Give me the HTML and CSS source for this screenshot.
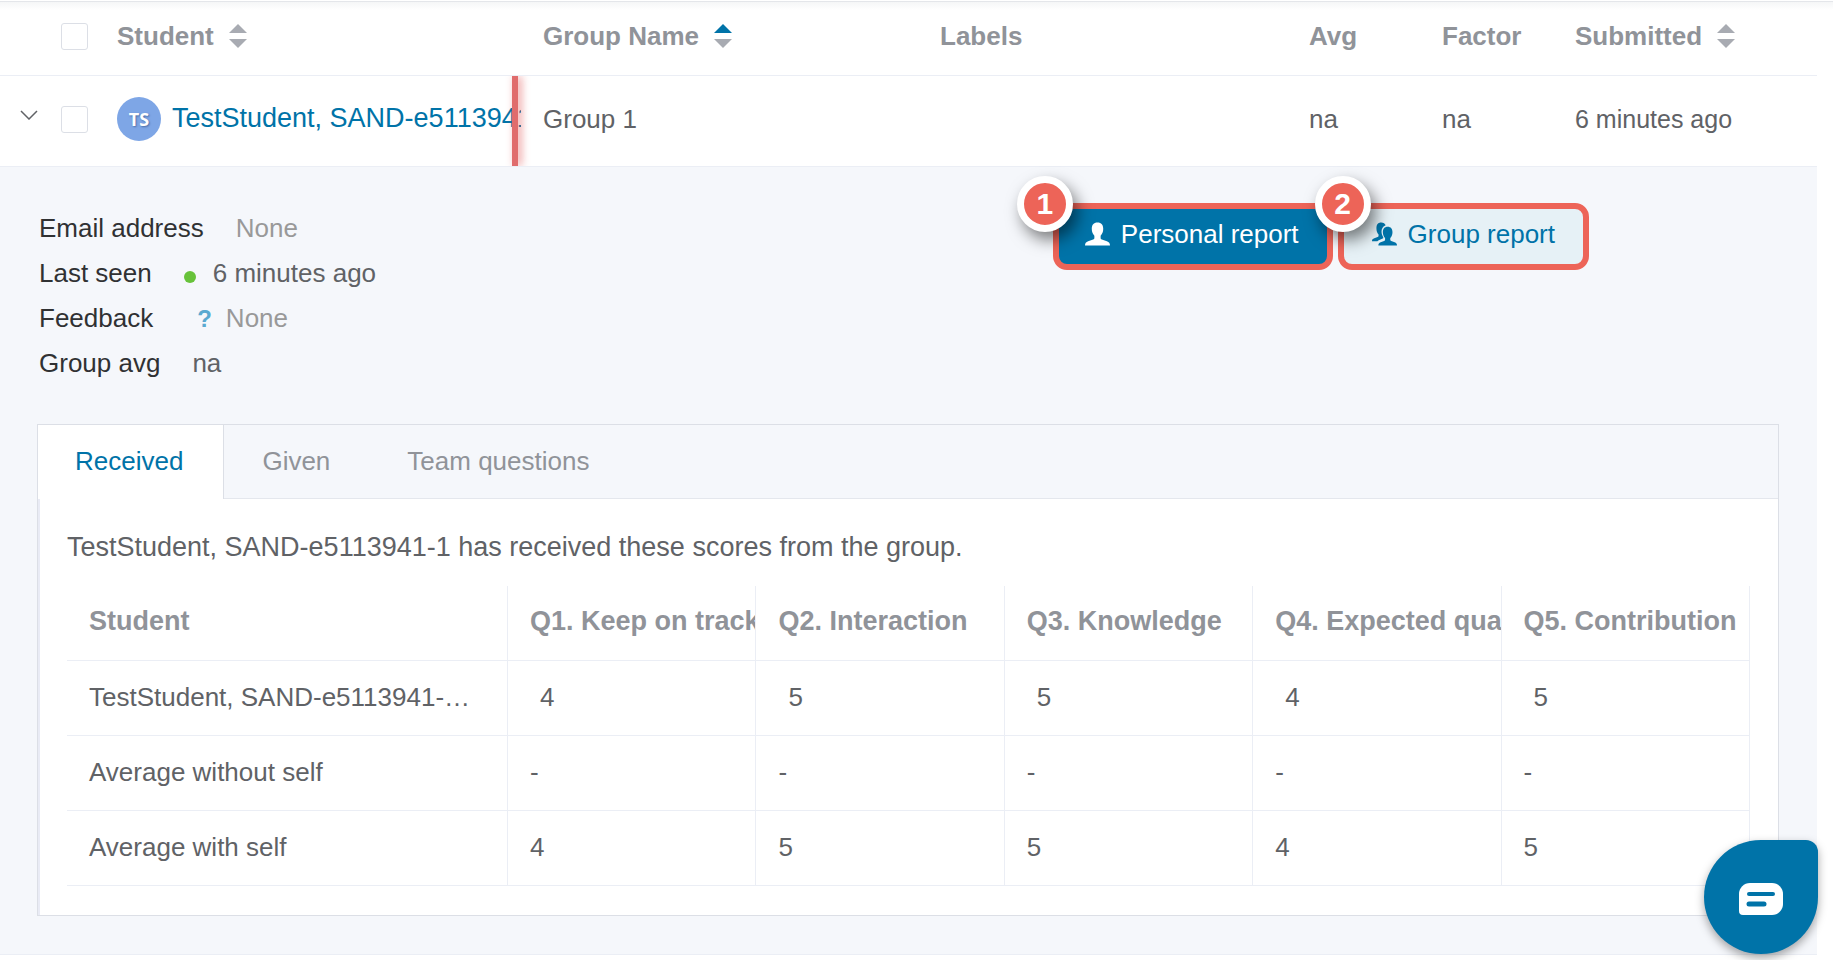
FILE: index.html
```html
<!DOCTYPE html>
<html lang="en">
<head>
<meta charset="utf-8">
<title>Student reports</title>
<link rel="stylesheet" href="styles.css">
</head>
<body>
<main class="page">
  <table class="students">
    <colgroup>
      <col class="c-expand"><col class="c-student"><col class="c-group"><col class="c-labels"><col class="c-avg"><col class="c-factor"><col class="c-submitted">
    </colgroup>
    <thead>
      <tr>
        <th><div class="select"><input type="checkbox" class="check" aria-label="Select all students"></div></th>
        <th><span class="sortable">Student <svg class="sort" viewBox="0 0 18 24"><path d="M9 0l9 9H0z"/><path d="M9 24l9-9H0z"/></svg></span></th>
        <th><span class="sortable">Group Name <svg class="sort" viewBox="0 0 18 24"><path class="active" d="M9 0l9 9H0z"/><path d="M9 24l9-9H0z"/></svg></span></th>
        <th>Labels</th>
        <th>Avg</th>
        <th>Factor</th>
        <th><span class="sortable">Submitted <svg class="sort" viewBox="0 0 18 24"><path d="M9 0l9 9H0z"/><path d="M9 24l9-9H0z"/></svg></span></th>
      </tr>
    </thead>
    <tbody>
      <tr>
        <td><div class="select">
          <button class="expand" aria-label="Collapse row"><svg viewBox="0 0 18 10"><path d="M1 1l8 8 8-8"/></svg></button>
          <input type="checkbox" class="check" aria-label="Select TestStudent">
        </div></td>
        <td class="student"><div class="person"><span class="avatar">TS</span><a href="#student" class="name">TestStudent, SAND-e5113941</a></div><span class="marker"></span></td>
        <td>Group 1</td>
        <td></td>
        <td>na</td>
        <td>na</td>
        <td class="time">6 minutes ago</td>
      </tr>
    </tbody>
  </table>

  <section class="detail">
    <div class="summary">
      <dl class="facts">
        <div class="fact"><dt>Email address</dt><dd class="muted">None</dd></div>
        <div class="fact"><dt>Last seen</dt><dd class="seen"><span class="dot"></span>6 minutes ago</dd></div>
        <div class="fact"><dt>Feedback</dt><dd class="muted feedback"><span class="help">?</span>None</dd></div>
        <div class="fact"><dt>Group avg</dt><dd>na</dd></div>
      </dl>
      <div class="actions">
        <div class="callout">
          <button class="report primary"><svg class="icon" viewBox="0 0 24 22"><path d="M12 0c3.700 0 5.500 2.300 5.500 6 0 3-1 5-2.500 6.600v2.200c0 .8.4 1.200 1.200 1.500l4.800 1.700c2 .8 3 1.800 3 4H0c0-2.200 1-3.200 3-4l4.800-1.700c.8-.3 1.200-.7 1.200-1.500v-2.200C7.500 11 6.500 9 6.500 6c0-3.700 1.800-6 5.500-6z"/></svg>Personal report</button>
          <span class="badge">1</span>
        </div>
        <div class="callout">
          <button class="report"><svg class="icon" viewBox="0 0 26 24"><path d="M9.500 0c2.600 0 4 1.200 4.700 3-2.800 1-4.300 3.500-4.300 6.500 0 2.300.7 4.200 1.800 5.800v1.200L7 18.500c-.6.300-1 .6-1.400 1H0c0-1.600.8-2.400 2.400-3l3.400-1.300c.8-.3 1-.7 1-1.300v-1.500C5.300 11 4.600 8.800 4.600 6 4.600 2.200 6.200 0 9.500 0z"/><path d="M16.300 4.500c3.300 0 5 2.200 5 5.700 0 2.600-.9 4.600-2.300 6v1.800c0 .7.300 1 1 1.300l3.600 1.300c1.600.6 2.400 1.600 2.400 3.400H6.600c0-1.800.8-2.800 2.400-3.400l3.600-1.300c.7-.3 1-.6 1-1.300v-1.800c-1.400-1.400-2.300-3.400-2.300-6 0-3.500 1.700-5.700 5-5.700z"/></svg>Group report</button>
          <span class="badge">2</span>
        </div>
      </div>
    </div>

    <div class="card">
      <div class="tabs" role="tablist">
        <button class="tab selected" role="tab" aria-selected="true">Received</button>
        <button class="tab" role="tab" aria-selected="false">Given</button>
        <button class="tab" role="tab" aria-selected="false">Team questions</button>
      </div>
      <div class="panel" role="tabpanel">
        <p class="intro">TestStudent, SAND-e5113941-1 has received these scores from the group.</p>
        <table class="scores">
          <colgroup><col class="s-name"><col><col><col><col><col></colgroup>
          <thead>
            <tr><th>Student</th><th>Q1. Keep on track</th><th>Q2. Interaction</th><th>Q3. Knowledge</th><th>Q4. Expected qual</th><th>Q5. Contribution</th></tr>
          </thead>
          <tbody>
            <tr class="given"><td>TestStudent, SAND-e5113941-…</td><td>4</td><td>5</td><td>5</td><td>4</td><td>5</td></tr>
            <tr><td>Average without self</td><td>-</td><td>-</td><td>-</td><td>-</td><td>-</td></tr>
            <tr><td>Average with self</td><td>4</td><td>5</td><td>5</td><td>4</td><td>5</td></tr>
          </tbody>
        </table>
      </div>
    </div>
  </section>
</main>
<button class="chat" aria-label="Open chat"><svg viewBox="0 0 44 32"><path class="bubble" d="M11 0h22a11 11 0 0 1 11 11v10a11 11 0 0 1-11 11H4a4 4 0 0 1-4-4V11A11 11 0 0 1 11 0z"/><path class="line" d="M10 11h24"/><path class="line thick" d="M10 21h15"/></svg></button>
</body>
</html>
```
FILE: styles.css
```css
* { box-sizing: border-box; }

body {
  margin: 0;
  background: #fff;
  color: #606266;
  font: 26px/30px "Liberation Sans", Arial, sans-serif;
}

button { font: inherit; color: inherit; cursor: pointer; }

.page { padding-top: 1px; }

/* Student list */
.students {
  width: calc(100% - 16px);
  table-layout: fixed;
  border-collapse: separate;
  border-spacing: 0;
}
.page::before {
  content: "";
  display: block;
  height: 8px;
  margin-bottom: -8px;
  border-top: 1px solid #e4e6ea;
  background: linear-gradient(#f5f6f7, #fff);
}
.c-expand { width: 95px; }
.c-student { width: 426px; }
.c-group { width: 397px; }
.c-avg { width: 133px; }
.c-factor { width: 133px; }
.c-submitted { width: 264px; }

.students th, .students td {
  padding: 0 0 0 22px;
  border-bottom: 1px solid #ebeef5;
  text-align: left;
}
.students th { height: 74px; padding-bottom: 5px; color: #909399; }
.students td { height: 91px; padding-bottom: 4px; }
.students .time { font-size: 25px; }

.sortable { display: flex; align-items: center; gap: 15px; }
.sort { width: 18px; height: 24px; fill: #a8abb2; }
.sort .active { fill: #0073a8; }

.select { display: flex; align-items: center; justify-content: flex-end; gap: 23px; padding-right: 7px; }
.students th:first-child, .students td:first-child { padding-left: 0; }
.check {
  appearance: none;
  width: 27px;
  height: 27px;
  margin: 0;
  border: 1px solid #dcdfe6;
  border-radius: 3px;
  background: #fff;
}
.expand { display: flex; padding: 0 0 8px; border: 0; background: none; }
.expand svg { width: 18px; height: 10px; fill: none; stroke: #606266; stroke-width: 1.500; }

.students .student { position: relative; }
.person { display: flex; align-items: center; gap: 11px; overflow: hidden; white-space: nowrap; }
.avatar {
  flex: none;
  width: 44px;
  height: 44px;
  border-radius: 50%;
  background: #7ea6e6;
  color: #fff;
  font: bold 18px/44px "Open Sans", sans-serif;
  text-align: center;
  text-shadow: 1px 1px 2px #4a6da6;
}
.name { padding-bottom: 2px; color: #0073a8; font-size: 27px; text-decoration: none; }
.marker {
  position: absolute;
  top: 0;
  bottom: 0;
  right: 3px;
  width: 6px;
  background: #e06c6c;
  box-shadow: 3px 0 8px rgba(224, 80, 80, .6);
  clip-path: inset(0 -14px 0 -8px);
}

/* Expanded row */
.detail {
  margin-right: 16px;
  padding: 36px 38px 38px 37px;
  border-bottom: 1px solid #ebeef5;
  background: #f5f7fb;
}
.summary { display: flex; justify-content: space-between; padding: 3px 190px 38px 2px; }
.facts { margin: 0; }
.fact { display: flex; gap: 32px; line-height: 45px; }
.fact dt { color: #303133; }
.fact dd { margin: 0; }
.fact .muted { color: #999; }
.seen { display: flex; align-items: center; gap: 17px; }
.dot { width: 12px; height: 12px; margin-top: 6px; border-radius: 50%; background: #67c23a; }
.feedback { display: flex; gap: 14px; padding-left: 12px; }
.help { color: #5aa9d0; font-weight: bold; font-size: 24px; }

.actions { display: flex; align-items: flex-start; gap: 5px; margin-top: -3px; }
.callout { position: relative; }
.report {
  display: flex;
  align-items: center;
  gap: 11px;
  height: 67px;
  padding: 0 28px 5px;
  border: 6px solid #ed6458;
  border-radius: 14px;
  background: #e6f1f6;
  color: #0073a8;
}
.report.primary { padding-left: 26px; background: #0073a8; color: #fff; }
.icon { width: 25px; height: 24px; fill: currentColor; }
.badge {
  position: absolute;
  top: -27px;
  left: -36px;
  width: 56px;
  height: 56px;
  border: 7px solid #fff;
  border-radius: 50%;
  background: #ed6458;
  box-shadow: 5px 8px 16px rgba(0, 0, 0, .5);
  color: #fff;
  font-size: 30px;
  font-weight: bold;
  line-height: 42px;
  text-align: center;
}
.callout + .callout .badge { left: -23px; }

/* Score card */
.card { border: 1px solid #dcdfe6; background: #fff; }
.tabs { display: flex; background: #f5f7fb; border-bottom: 1px solid #e4e7ed; }
.tab {
  height: 73px;
  padding: 0 39px 2px 38px;
  border: 0;
  background: none;
  color: #909399;
}
.tab.selected {
  height: 74px;
  margin-bottom: -1px;
  padding-left: 37px;
  padding-right: 40px;
  border-right: 1px solid #dcdfe6;
  background: #fff;
  color: #0073a8;
}
.panel { padding: 33px 28px 29px 27px; border-left: 2px solid #e9ebf5; }
.intro { margin: 0 0 24px; font-size: 27px; }
.scores {
  width: 100%;
  table-layout: fixed;
  border-collapse: separate;
  border-spacing: 0;
}
.s-name { width: 441px; }
.scores th, .scores td {
  height: 75px;
  padding: 0 0 4px 22px;
  border-right: 1px solid #ebeef5;
  border-bottom: 1px solid #ebeef5;
  overflow: hidden;
  text-align: left;
  white-space: nowrap;
}
.scores th { color: #909399; font-size: 27px; }
.scores td { padding-bottom: 2px; }
.given td + td { padding-left: 32px; }

.chat {
  position: fixed;
  right: 15px;
  bottom: 6px;
  width: 114px;
  height: 114px;
  display: grid;
  place-items: center;
  padding: 4px 0 0;
  border: 0;
  border-radius: 57px 12px 57px 57px;
  background: #0073a8;
  box-shadow: 0 4px 10px rgba(0, 0, 0, .35);
}
.chat svg { width: 44px; height: 32px; }
.bubble { fill: #fff; }
.line { stroke: #0073a8; stroke-width: 4; stroke-linecap: round; }
.thick { stroke-width: 5; }
```
